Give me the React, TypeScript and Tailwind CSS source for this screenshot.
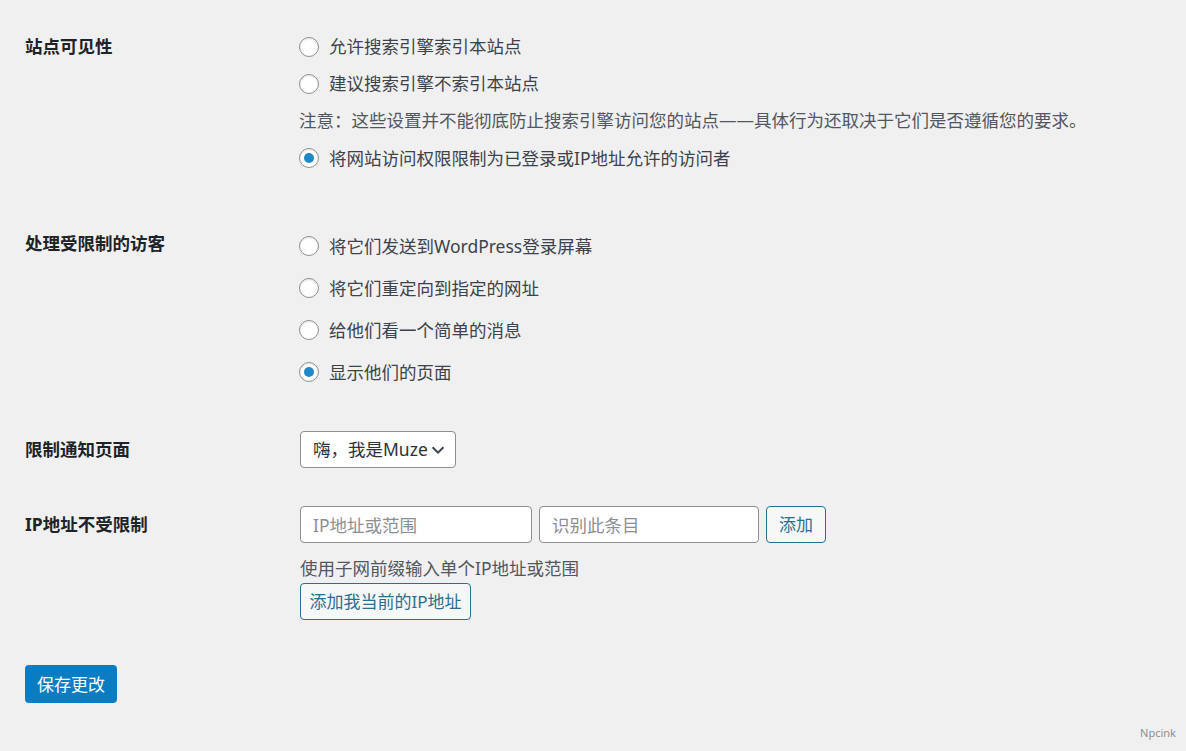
import { useState } from 'react';

const font = { fontFamily: '"Noto Sans", "Noto Sans CJK SC", sans-serif' };

function Radio({ checked, label, onChange }: { checked: boolean; label: string; onChange: () => void }) {
  return (
    <label className="flex items-center gap-[10px] cursor-pointer">
      <span className="flex h-[20px] w-[20px] shrink-0 items-center justify-center rounded-full border border-[#8c8f94] bg-white shadow-[inset_0_1px_2px_rgba(0,0,0,0.1)]">
        {checked && <span className="h-[10px] w-[10px] rounded-full bg-[#1e88c8]" />}
      </span>
      <input type="radio" className="hidden" checked={checked} onChange={onChange} />
      <span>{label}</span>
    </label>
  );
}

export default function App() {
  const [visibility, setVisibility] = useState(2);
  const [handling, setHandling] = useState(3);

  const visOptions = ['允许搜索引擎索引本站点', '建议搜索引擎不索引本站点'];
  const handleOptions = [
    '将它们发送到WordPress登录屏幕',
    '将它们重定向到指定的网址',
    '给他们看一个简单的消息',
    '显示他们的页面',
  ];

  return (
    <div className="relative min-h-[751px] w-full bg-[#f0f0f1] text-[17.5px] text-[#3c434a]" style={font}>
      <div className="pl-[25px] pt-[28px]">
        {/* 站点可见性 */}
        <div className="flex">
          <div className="w-[274px] shrink-0 text-[17.5px] font-bold leading-[37px] text-[#1d2327]">站点可见性</div>
          <div className="flex flex-col">
            {visOptions.map((o, i) => (
              <div key={o} className="flex h-[37px] items-center">
                <Radio checked={visibility === i} label={o} onChange={() => setVisibility(i)} />
              </div>
            ))}
            <div className="flex h-[37px] items-center text-[#50575e]">
              注意：这些设置并不能彻底防止搜索引擎访问您的站点——具体行为还取决于它们是否遵循您的要求。
            </div>
            <div className="flex h-[38px] items-center">
              <Radio
                checked={visibility === 2}
                label="将网站访问权限限制为已登录或IP地址允许的访问者"
                onChange={() => setVisibility(2)}
              />
            </div>
          </div>
        </div>

        {/* 处理受限制的访客 */}
        <div className="mt-[48px] flex">
          <div className="w-[274px] shrink-0 text-[17.5px] font-bold leading-[36px] text-[#1d2327]">处理受限制的访客</div>
          <div className="flex flex-col">
            {handleOptions.map((o, i) => (
              <div key={o} className="flex h-[42px] items-center">
                <Radio checked={handling === i} label={o} onChange={() => setHandling(i)} />
              </div>
            ))}
          </div>
        </div>

        {/* 限制通知页面 */}
        <div className="mt-[38px] flex items-center">
          <div className="w-[275px] shrink-0 text-[17.5px] font-bold text-[#1d2327]">限制通知页面</div>
          <button className="flex h-[37px] w-[156px] items-center justify-between whitespace-nowrap rounded-[4px] border border-[#8c8f94] bg-white pl-[12px] pr-[8px] text-[17.5px] text-[#2c3338]">
            <span>嗨，我是Muze</span>
            <svg width="18" height="18" viewBox="0 0 20 20" fill="none" stroke="#3c434a" strokeWidth="2.2">
              <path d="M4 7l6 6 6-6" />
            </svg>
          </button>
        </div>

        {/* IP地址不受限制 */}
        <div className="mt-[38px] flex">
          <div className="w-[275px] shrink-0 pt-[4px] text-[17.5px] font-bold leading-[28px] text-[#1d2327]">IP地址不受限制</div>
          <div className="flex flex-col">
            <div className="flex items-center gap-[7px]">
              <input
                placeholder="IP地址或范围"
                className="h-[37px] w-[232px] rounded-[4px] border border-[#8c8f94] bg-white px-[12px] text-[17.5px] placeholder:text-[#8c8f94] outline-none"
              />
              <input
                placeholder="识别此条目"
                className="h-[37px] w-[220px] rounded-[4px] border border-[#8c8f94] bg-white px-[12px] text-[17.5px] placeholder:text-[#8c8f94] outline-none"
              />
              <button className="h-[37px] w-[60px] rounded-[4px] border border-[#2a6f8f] bg-[#f6f7f7] text-[17px] text-[#2a6f8f]">
                添加
              </button>
            </div>
            <div className="mt-[12px] text-[#50575e]">使用子网前缀输入单个IP地址或范围</div>
            <button className="mt-[2px] h-[37px] w-[171px] whitespace-nowrap rounded-[4px] border border-[#2a6f8f] bg-[#f6f7f7] text-[17px] text-[#2a6f8f]">
              添加我当前的IP地址
            </button>
          </div>
        </div>

        {/* 保存 */}
        <button className="mt-[45px] h-[38px] w-[92px] rounded-[4px] bg-[#0a7cc1] text-[17px] text-white">保存更改</button>
      </div>

      <div className="absolute bottom-[10px] right-[10px] text-[11px] text-[#8c8f94]">Npcink</div>
    </div>
  );
}
